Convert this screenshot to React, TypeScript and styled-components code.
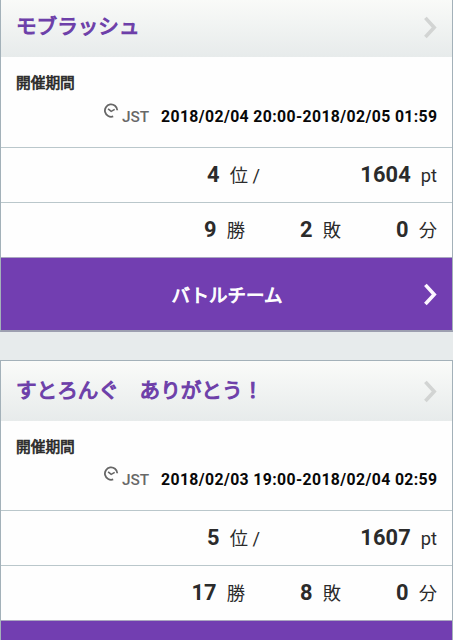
import React from "react";
import styled, { createGlobalStyle } from "styled-components";

const GlobalStyle = createGlobalStyle`
  * { box-sizing: border-box; }
  body {
    margin: 0;
    overflow: hidden;
    background: #e7ebec;
    color: #2b2b2b;
    font-family: Roboto, "Noto Sans CJK JP", sans-serif;
  }
`;

const Page = styled.main`
  height: 640px;
  overflow: hidden;
  display: flex;
  flex-direction: column;
  gap: 28px;
`;

const Card = styled.section<{ $scrolled?: boolean }>`
  flex: none;
  margin-top: ${(p) => (p.$scrolled ? "-4px" : "0")};
  border: 1px solid #a3b1b9;
  border-bottom: 2px solid #9d9fb0;
  background: #fefefe;
`;

const Header = styled.header`
  height: 60px;
  padding: 0 14px 0 15px;
  display: flex;
  align-items: center;
  justify-content: space-between;
  background: linear-gradient(#fafbf9, #e7ebeb);
`;

const Title = styled.h2`
  margin: 0 0 4px;
  font-size: 20.6px;
  line-height: 30px;
  font-weight: 400;
  font-family: "Noto Sans CJK JP", sans-serif;
  color: #6d3fa9;
  -webkit-text-stroke: 1.1px #6d3fa9;
  white-space: pre;
`;

const Period = styled.div<{ $height: number }>`
  height: ${(p) => p.$height}px;
  padding: 15px 15px 0;
`;

const Label = styled.div`
  font: 400 14.7px/20px "Noto Sans CJK JP", sans-serif;
  -webkit-text-stroke: 0.7px #2b2b2b;
`;

const Time = styled.div<{ $gap: number }>`
  height: 24px;
  margin-top: ${(p) => p.$gap}px;
  display: flex;
  justify-content: flex-end;
  line-height: 24px;
`;

const ClockIcon = styled.svg`
  width: 16px;
  height: 16px;
  margin: -3px 3px 0 0;
  fill: none;
  stroke: #666;
`;

const Zone = styled.span`
  width: 39px;
  font-size: 15.4px;
  font-weight: 500;
  color: #686868;
`;

const Dates = styled.span`
  width: 276px;
  font-size: 15.8px;
  font-weight: 700;
  letter-spacing: 0.38px;
  color: #080808;
  white-space: nowrap;
`;

const Row = styled.div`
  height: 55px;
  padding-right: 15px;
  border-top: 1px solid #bac7cb;
  display: flex;
  justify-content: flex-end;
  align-items: center;
`;

const Stat = styled.div<{ $width: number }>`
  width: ${(p) => p.$width}px;
  display: flex;
  justify-content: flex-end;
  align-items: baseline;
  line-height: 30px;
`;

const Value = styled.strong`
  font-size: 21.8px;
  font-weight: 700;
  letter-spacing: 0.1px;
`;

const Unit = styled.span`
  margin-left: 10px;
  font-size: 18.3px;
  font-weight: 400;
  white-space: pre;
`;

const TeamButton = styled.button`
  width: 100%;
  height: 73px;
  padding: 0 14px 0 15px;
  border: 0;
  border-top: 1px solid #aba7c0;
  background: #723eb1;
  display: grid;
  grid-template-columns: 16px 1fr 16px;
  align-items: center;
  color: #fff;
  font: 400 18.5px/28px "Noto Sans CJK JP", sans-serif;
`;

const TeamName = styled.span`
  -webkit-text-stroke: 0.9px #fff;
`;

const ArrowIcon = styled.svg<{ $light?: boolean }>`
  width: 16px;
  height: 24px;
  fill: none;
  stroke: ${(p) => (p.$light ? "#fcf7ff" : "#d2d4d3")};
  stroke-width: 3.6;
`;

function Arrow({ light }: { light?: boolean }) {
  return (
    <ArrowIcon $light={light} viewBox="0 0 16 24">
      <path d="M3.4 2.9 12.2 12.5 3.4 22" />
    </ArrowIcon>
  );
}

function Clock() {
  return (
    <ClockIcon viewBox="0 0 16 16">
      <path d="M14.3 8.2A6.2 6.2 0 1 0 10.2 14.4" strokeWidth="1.8" />
      <path d="M5.1 6.8 8.2 9.4 11.7 7.4" strokeWidth="1.6" />
    </ClockIcon>
  );
}

interface Battle {
  title: string;
  dates: string;
  rank: number;
  points: number;
  wins: number;
  losses: number;
  draws: number;
  periodHeight: number;
}

const battles: Battle[] = [
  {
    title: "モブラッシュ",
    dates: "2018/02/04 20:00-2018/02/05 01:59",
    rank: 4, points: 1604, wins: 9, losses: 2, draws: 0,
    periodHeight: 90,
  },
  {
    title: "すとろんぐ　ありがとう！",
    dates: "2018/02/03 19:00-2018/02/04 02:59",
    rank: 5, points: 1607, wins: 17, losses: 8, draws: 0,
    periodHeight: 89,
  },
];

export default function App() {
  return (
    <>
      <GlobalStyle />
      <Page>
        {battles.map((b, i) => (
          <Card key={b.title} $scrolled={i === 0}>
            <Header>
              <Title>{b.title}</Title>
              <Arrow />
            </Header>
            <Period $height={b.periodHeight}>
              <Label>開催期間</Label>
              <Time $gap={b.periodHeight - 77}>
                <Clock />
                <Zone>JST</Zone>
                <Dates>{b.dates}</Dates>
              </Time>
            </Period>
            <Row>
              <Stat $width={91}>
                <Value>{b.rank}</Value>
                <Unit>位 /</Unit>
              </Stat>
              <Stat $width={177}>
                <Value>{b.points}</Value>
                <Unit>pt</Unit>
              </Stat>
            </Row>
            <Row>
              <Stat $width={96}>
                <Value>{b.wins}</Value>
                <Unit>勝</Unit>
              </Stat>
              <Stat $width={96}>
                <Value>{b.losses}</Value>
                <Unit>敗</Unit>
              </Stat>
              <Stat $width={96}>
                <Value>{b.draws}</Value>
                <Unit>分</Unit>
              </Stat>
            </Row>
            <TeamButton>
              <span />
              <TeamName>バトルチーム</TeamName>
              <Arrow light />
            </TeamButton>
          </Card>
        ))}
      </Page>
    </>
  );
}
